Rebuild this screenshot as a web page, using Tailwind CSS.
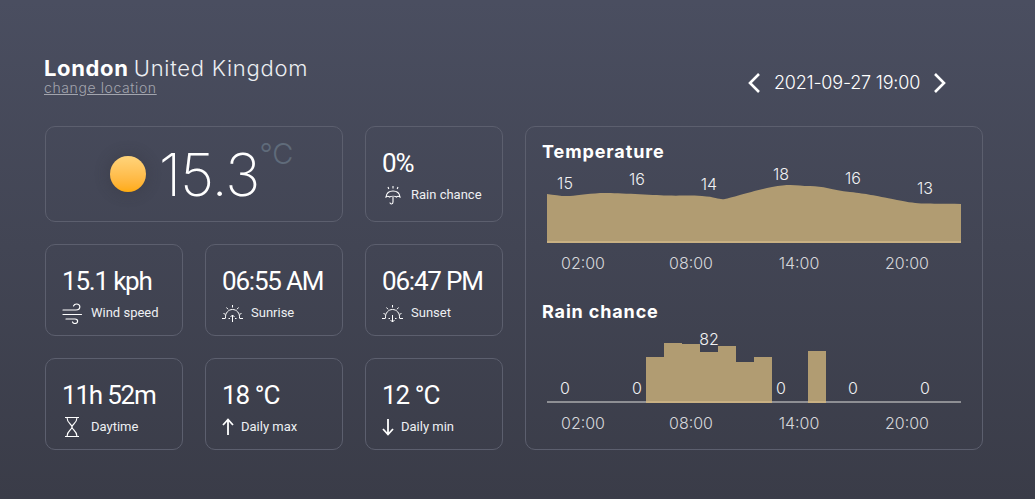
<!doctype html>
<html>
<head>
<meta charset="utf-8">
<script src="https://cdn.jsdelivr.net/npm/@tailwindcss/browser@4"></script>
</head>
<body class="m-0 overflow-hidden">
<div class="h-[499px] w-[1035px] bg-gradient-to-b from-[#4a4e60] to-[#3a3c48] pl-[45px] pt-[56px] font-['Inter',sans-serif] text-white">
  <header class="flex h-[70px] w-[938px] items-start justify-between">
    <div class="ml-[-1px]">
      <h1 class="h-[25px] whitespace-nowrap text-[22px] leading-[24px]"><span class="font-bold tracking-[0.65px]">London</span> <span class="ml-[-1px] font-light tracking-[0.72px] text-[#eceef2]">United Kingdom</span></h1>
      <a class="block text-[14px] leading-[14px] font-light tracking-[0.6px] text-[#a3a5ae] underline">change location</a>
    </div>
    <div class="mt-[16px] mr-[36px] flex w-[200px] items-center justify-between">
      <svg class="h-[22px] w-[14px]" viewBox="0 0 14 22" fill="none" stroke="white" stroke-width="2.6"><path d="M12 2 3 11l9 9"/></svg>
      <span class="text-[18px] leading-[22px] font-light tracking-[-0.2px] whitespace-nowrap">2021-09-27 19:00</span>
      <svg class="h-[22px] w-[14px]" viewBox="0 0 14 22" fill="none" stroke="white" stroke-width="2.6"><path d="m2 2 9 9-9 9"/></svg>
    </div>
  </header>

  <main class="grid grid-cols-[138px_138px_138px_458px] grid-rows-[96px_92px_92px] gap-[22px]">
    <section class="col-span-2 flex items-center justify-center rounded-[10px] border border-[#5c5f6e] pl-[15px]">
      <div class="h-[36px] w-[36px] rounded-full bg-gradient-to-b from-[#ffd47a] to-[#ffab0a] shadow-[0_0_12px_4px_rgba(50,50,60,0.25)]"></div>
      <div class="ml-[13px] mt-[2px] text-[59px] leading-[60px] font-extralight tracking-[-1px]">15.3</div>
      <div class="mb-[40px] text-[29px] leading-[30px] font-light text-[#5f6b7a]">°C</div>
    </section>

    <section class="flex flex-col rounded-[10px] border border-[#5c5f6e] pl-[16px] pt-[20px] font-['Roboto',sans-serif]">
      <div class="text-[26px] leading-[32px] tracking-[-1.2px]">0%</div>
      <div class="mt-[5px] ml-[1px] flex items-center gap-[8px] text-[13px] text-[#eef0f3]">
        <svg class="h-[22px] w-[20px]" viewBox="0 0 20 22" fill="none" stroke="white" stroke-width="1.1"><path d="M3 13c.5-4 3.500-6 7-6s6.500 2 7 6c-1.500-1-2.500-1-3.500 0-1.500-1-5-1-7 0-1-1-2-1-3.500 0Z"/><path d="M10 13v5c0 2.500-3 2.500-3 .5M10 2v2.500M5 3l.8 2M15 3l-.8 2"/></svg>
        <span>Rain chance</span>
      </div>
    </section>

    <section class="col-start-4 row-span-3 row-start-1 rounded-[10px] border border-[#5c5f6e] pl-[16px] pt-[13px]">
      <h2 class="text-[18px] leading-[24px] font-bold tracking-[0.9px]">Temperature</h2>
      <div class="ml-[5px] w-[414px]">
        <svg class="mt-[-5px] block h-[84px] w-[414px] overflow-visible" viewBox="0 0 414 84">
          <path fill="#b19c72" d="M0 35C8 36 15 37.500 23 37S45 34 58 34 105 36 120 36.500 140 36 155 37 172 41 178 40 205 32 225 28 250 27 263 27 285 31 303 33 325 36 350 41 376 44 414 45V83H0Z"/>
          <rect y="82" width="414" height="2" fill="#c9b183"/>
          <g fill="#f0f1f3" font-size="16" font-weight="300" text-anchor="middle">
            <text x="18" y="30">15</text><text x="90" y="26">16</text><text x="162" y="31">14</text><text x="234" y="21">18</text><text x="306" y="25">16</text><text x="378" y="35">13</text>
          </g>
        </svg>
        <div class="ml-[-18px] mt-[10px] grid w-[432px] grid-cols-4 text-center text-[16px] leading-[20px] font-light text-[#d6d7db]">
          <span>02:00</span><span>08:00</span><span>14:00</span><span>20:00</span>
        </div>
      </div>
      <h2 class="mt-[27px] text-[18px] leading-[24px] font-bold tracking-[0.85px]">Rain chance</h2>
      <div class="ml-[5px] w-[414px]">
        <svg class="mt-[-1px] block h-[80px] w-[414px] overflow-visible" viewBox="0 0 414 80">
          <rect y="78" width="414" height="2" fill="#8e8f94"/>
          <g fill="#b19c72">
            <rect x="99" y="34" width="18" height="45"/><rect x="117" y="20" width="18" height="59"/><rect x="135" y="21" width="18" height="58"/><rect x="153" y="29" width="18" height="50"/><rect x="171" y="23" width="18" height="56"/><rect x="189" y="39" width="18" height="40"/><rect x="207" y="34" width="18" height="45"/><rect x="261" y="28" width="18" height="51"/>
          </g>
          <g fill="#c9b183"><rect x="99" y="78" width="126" height="2"/><rect x="261" y="78" width="18" height="2"/></g>
          <g fill="#f0f1f3" font-size="16" font-weight="300" text-anchor="middle">
            <text x="18" y="71">0</text><text x="90" y="71">0</text><text x="162" y="22">82</text><text x="234" y="71">0</text><text x="306" y="71">0</text><text x="378" y="71">0</text>
          </g>
        </svg>
        <div class="ml-[-18px] mt-[10px] grid w-[432px] grid-cols-4 text-center text-[16px] leading-[20px] font-light text-[#d6d7db]">
          <span>02:00</span><span>08:00</span><span>14:00</span><span>20:00</span>
        </div>
      </div>
    </section>

    <section class="flex flex-col rounded-[10px] border border-[#5c5f6e] pl-[16px] pt-[19px] font-['Roboto',sans-serif]">
      <div class="text-[26px] leading-[34px] tracking-[-1.2px] whitespace-nowrap">15.1 kph</div>
      <div class="mt-[4px] flex items-center gap-[8px] text-[13px] text-[#eef0f3]">
        <svg class="h-[22px] w-[21px]" viewBox="0 0 21 22" fill="none" stroke="white" stroke-width="1.2" stroke-linecap="round"><path d="M1 8h13c5 0 5-6 .5-6-1.500 0-2.500.8-3 2M1 12.500h18.500M4 17h9c3.500 0 3.500 4.500 0 4.500-1.200 0-2-.5-2.500-1.500"/></svg>
        <span>Wind speed</span>
      </div>
    </section>
    <section class="flex flex-col rounded-[10px] border border-[#5c5f6e] pl-[16px] pt-[19px] font-['Roboto',sans-serif]">
      <div class="text-[26px] leading-[34px] tracking-[-1.2px] whitespace-nowrap">06:55 AM</div>
      <div class="mt-[4px] flex items-center gap-[8px] text-[13px] text-[#eef0f3]">
        <svg class="h-[22px] w-[21px]" viewBox="0 0 21 22" fill="none" stroke="white" stroke-width="1"><path d="M3.500 16c-.5-5 3-8.500 7-8.500s7.500 3.500 7 8.500M0 16.500h3.500M17.500 16.500h3.500M6.500 16.500H8M13 16.500h1.500M10.500 20v-7M8.500 15l2-2 2 2M10.500 3v2.500M4.500 5.500l1.500 1.800M16.500 5.500 15 7.300M1.500 11.500l2 .8M19.500 11.500l-2 .8"/></svg>
        <span>Sunrise</span>
      </div>
    </section>
    <section class="flex flex-col rounded-[10px] border border-[#5c5f6e] pl-[16px] pt-[19px] font-['Roboto',sans-serif]">
      <div class="text-[26px] leading-[34px] tracking-[-1.2px] whitespace-nowrap">06:47 PM</div>
      <div class="mt-[4px] flex items-center gap-[8px] text-[13px] text-[#eef0f3]">
        <svg class="h-[22px] w-[21px]" viewBox="0 0 21 22" fill="none" stroke="white" stroke-width="1"><path d="M3.500 16c-.5-5 3-8.500 7-8.500s7.500 3.500 7 8.500M0 16.500h3.500M17.500 16.500h3.500M6.500 16.500H8M13 16.500h1.500M10.500 13v7M8.500 18l2 2 2-2M10.500 3v2.500M4.500 5.500l1.500 1.800M16.500 5.500 15 7.300M1.500 11.500l2 .8M19.500 11.500l-2 .8"/></svg>
        <span>Sunset</span>
      </div>
    </section>

    <section class="flex flex-col rounded-[10px] border border-[#5c5f6e] pl-[16px] pt-[19px] font-['Roboto',sans-serif]">
      <div class="text-[26px] leading-[34px] tracking-[-1.2px] whitespace-nowrap">11h 52m</div>
      <div class="mt-[4px] flex items-center gap-[8px] text-[13px] text-[#eef0f3]">
        <svg class="h-[22px] w-[21px]" viewBox="0 0 21 22" fill="none" stroke="white" stroke-width="1.1"><path d="M3 1.500h14M3 20.500h14M5 1.500c0 6 5 6.500 5 9.500s-5 3.500-5 9.500M15 1.500c0 6-5 6.500-5 9.500s5 3.500 5 9.500"/></svg>
        <span>Daytime</span>
      </div>
    </section>
    <section class="flex flex-col rounded-[10px] border border-[#5c5f6e] pl-[16px] pt-[19px] font-['Roboto',sans-serif]">
      <div class="text-[26px] leading-[34px] tracking-[-1px] whitespace-nowrap">18 °C</div>
      <div class="mt-[4px] ml-[-1px] flex items-center gap-[6px] text-[13px] text-[#eef0f3]">
        <svg class="h-[22px] w-[14px]" viewBox="0 0 14 22" fill="none" stroke="white" stroke-width="1.8"><path d="M7 19V4M2 9l5-5.500L12 9"/></svg>
        <span>Daily max</span>
      </div>
    </section>
    <section class="flex flex-col rounded-[10px] border border-[#5c5f6e] pl-[16px] pt-[19px] font-['Roboto',sans-serif]">
      <div class="text-[26px] leading-[34px] tracking-[-1px] whitespace-nowrap">12 °C</div>
      <div class="mt-[4px] ml-[-1px] flex items-center gap-[6px] text-[13px] text-[#eef0f3]">
        <svg class="h-[22px] w-[14px]" viewBox="0 0 14 22" fill="none" stroke="white" stroke-width="1.8"><path d="M7 3v15M2 13l5 5.500 5-5.500"/></svg>
        <span>Daily min</span>
      </div>
    </section>
  </main>
</div>
</body>
</html>
